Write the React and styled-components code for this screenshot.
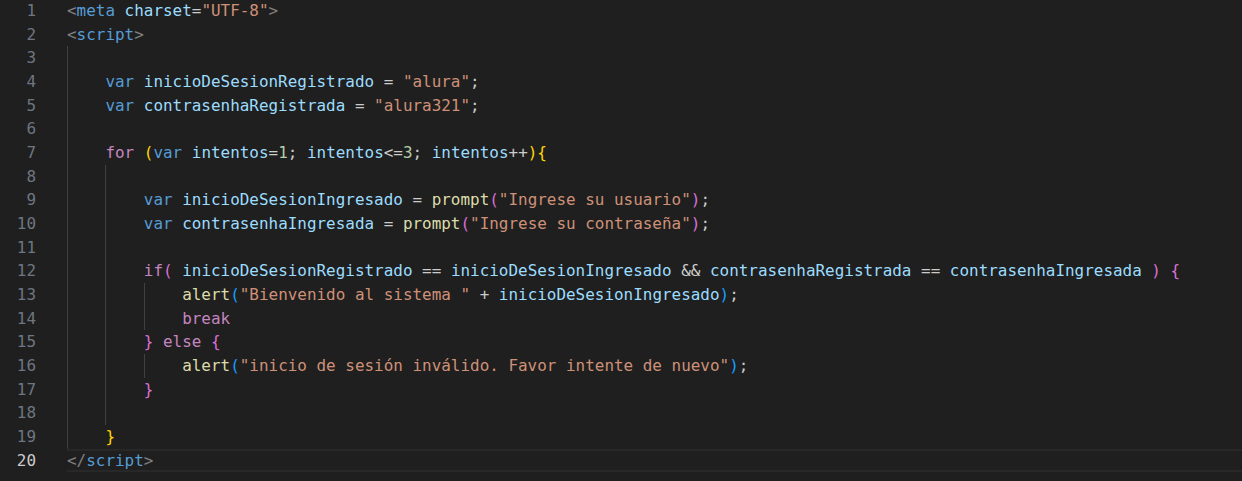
import React from "react";
import styled, { createGlobalStyle } from "styled-components";

const Global = createGlobalStyle`
  html, body { margin: 0; padding: 0; background: #1f1f1f; }
  body { width: 1242px; height: 481px; overflow: hidden; }
`;

const COLORS = {
  punc: "#808080",
  tag: "#569cd6",
  attr: "#9cdcfe",
  str: "#ce9178",
  txt: "#cccccc",
  kw: "#569cd6",
  ctl: "#c586c0",
  v: "#9cdcfe",
  fn: "#dcdcaa",
  num: "#b5cea8",
  b1: "#ffd700",
  b2: "#da70d6",
  b3: "#179fff",
};

const Editor = styled.div`
  display: flex;
  flex-direction: column;
  margin-top: -1px;
  font-family: "DejaVu Sans Mono", "Liberation Mono", monospace;
  font-size: 15.95px;
  line-height: 23.68px;
  white-space: pre;
`;

const Row = styled.div`
  display: flex;
  height: 23.68px;
`;

const LineNo = styled.div`
  width: 36px;
  flex: none;
  text-align: right;
  color: ${(p) => (p.$active ? "#cccccc" : "#6e7681")};
`;

const Code = styled.div`
  flex: 1;
  display: flex;
  align-items: stretch;
  margin-left: 31px;
  box-sizing: border-box;
  border-top: ${(p) => (p.$active ? "2px solid #282828" : "none")};
  border-bottom: ${(p) => (p.$active ? "2px solid #282828" : "none")};
  line-height: ${(p) => (p.$active ? "19.68px" : "23.68px")};
`;

const Indent = styled.span`
  display: inline-block;
  flex: none;
  width: 38.4px;
  box-shadow: ${(p) => (p.$guide ? "inset 1px 0 0 #404040" : "none")};
`;

const Tok = styled.span`
  color: ${(p) => COLORS[p.$c] || "#cccccc"};
`;

const t = (c, s) => [c, s];

const lines = [
  { ind: [], toks: [t("punc", "<"), t("tag", "meta"), t("txt", " "), t("attr", "charset"), t("txt", "="), t("str", '"UTF-8"'), t("punc", ">")] },
  { ind: [], toks: [t("punc", "<"), t("tag", "script"), t("punc", ">")] },
  { ind: [1], toks: [] },
  { ind: [1], toks: [t("kw", "var"), t("v", " inicioDeSesionRegistrado"), t("txt", " = "), t("str", '"alura"'), t("txt", ";")] },
  { ind: [1], toks: [t("kw", "var"), t("v", " contrasenhaRegistrada"), t("txt", " = "), t("str", '"alura321"'), t("txt", ";")] },
  { ind: [1], toks: [] },
  { ind: [1], toks: [t("ctl", "for"), t("txt", " "), t("b1", "("), t("kw", "var"), t("v", " intentos"), t("txt", "="), t("num", "1"), t("txt", "; "), t("v", "intentos"), t("txt", "<="), t("num", "3"), t("txt", "; "), t("v", "intentos"), t("txt", "++"), t("b1", ")"), t("b1", "{")] },
  { ind: [1, 1], toks: [] },
  { ind: [1, 1], toks: [t("kw", "var"), t("v", " inicioDeSesionIngresado"), t("txt", " = "), t("fn", "prompt"), t("b2", "("), t("str", '"Ingrese su usuario"'), t("b2", ")"), t("txt", ";")] },
  { ind: [1, 1], toks: [t("kw", "var"), t("v", " contrasenhaIngresada"), t("txt", " = "), t("fn", "prompt"), t("b2", "("), t("str", '"Ingrese su contraseña"'), t("b2", ")"), t("txt", ";")] },
  { ind: [1, 1], toks: [] },
  { ind: [1, 1], toks: [t("ctl", "if"), t("b2", "("), t("v", " inicioDeSesionRegistrado"), t("txt", " == "), t("v", "inicioDeSesionIngresado"), t("txt", " && "), t("v", "contrasenhaRegistrada"), t("txt", " == "), t("v", "contrasenhaIngresada "), t("b2", ")"), t("txt", " "), t("b2", "{")] },
  { ind: [1, 1, 1], toks: [t("fn", "alert"), t("b3", "("), t("str", '"Bienvenido al sistema "'), t("txt", " + "), t("v", "inicioDeSesionIngresado"), t("b3", ")"), t("txt", ";")] },
  { ind: [1, 1, 1], toks: [t("ctl", "break")] },
  { ind: [1, 1], toks: [t("b2", "}"), t("ctl", " else "), t("b2", "{")] },
  { ind: [1, 1, 1], toks: [t("fn", "alert"), t("b3", "("), t("str", '"inicio de sesión inválido. Favor intente de nuevo"'), t("b3", ")"), t("txt", ";")] },
  { ind: [1, 1], toks: [t("b2", "}")] },
  { ind: [1, 1], toks: [] },
  { ind: [1], toks: [t("b1", "}")] },
  { ind: [], toks: [t("punc", "</"), t("tag", "script"), t("punc", ">")], active: true },
];

export default function App() {
  return (
    <>
      <Global />
      <Editor>
        {lines.map((ln, i) => (
          <Row key={i}>
            <LineNo $active={ln.active}>{i + 1}</LineNo>
            <Code $active={ln.active}>
              {ln.ind.map((g, j) => (
                <Indent key={j} $guide={!!g} />
              ))}
              <span>
                {ln.toks.map(([c, s], k) => (
                  <Tok key={k} $c={c}>
                    {s}
                  </Tok>
                ))}
              </span>
            </Code>
          </Row>
        ))}
      </Editor>
    </>
  );
}
